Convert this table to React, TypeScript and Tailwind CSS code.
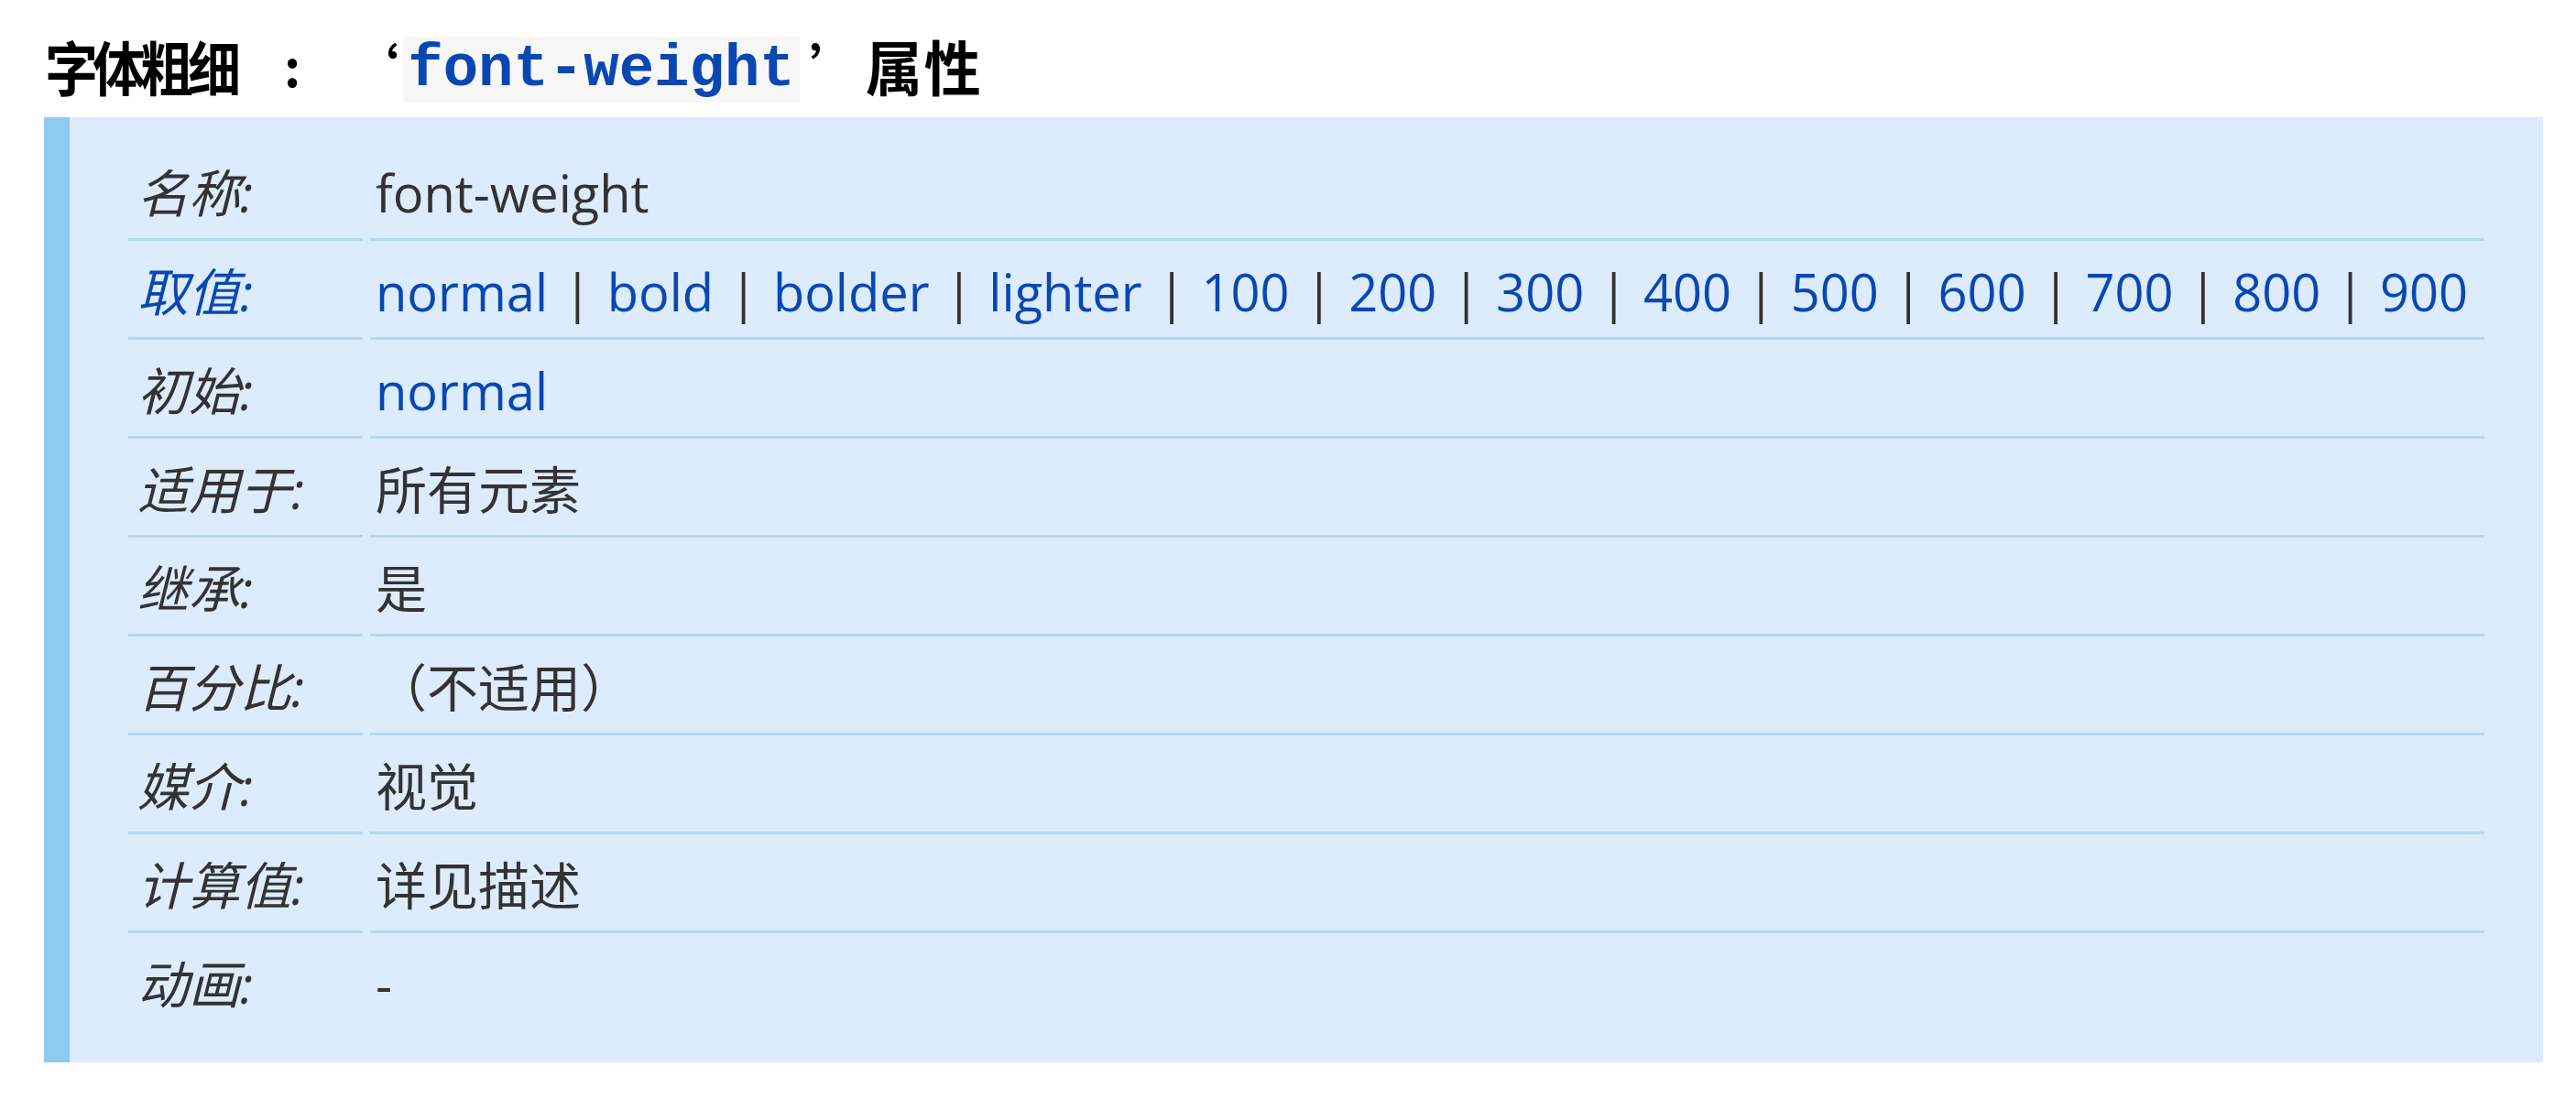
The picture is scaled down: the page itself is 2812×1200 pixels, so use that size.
import React from "react";

const Sep = () => <span className="text-[#333333] mx-[17px]">|</span>;

const values = ["normal", "bold", "bolder", "lighter", "100", "200", "300", "400", "500", "600", "700", "800", "900"];

type Row = { label: string; blueLabel?: boolean; value: React.ReactNode; last?: boolean };

const rows: Row[] = [
  { label: "名称:", value: <span className="text-[#333333]">font-weight</span> },
  {
    label: "取值:",
    blueLabel: true,
    value: (
      <span className="whitespace-nowrap">
        {values.map((v, i) => (
          <React.Fragment key={v}>
            {i > 0 && <Sep />}
            <span className="text-[#0b47b3]">{v}</span>
          </React.Fragment>
        ))}
      </span>
    ),
  },
  { label: "初始:", value: <span className="text-[#0b47b3]">normal</span> },
  { label: "适用于:", value: <span className="text-[#333333]">所有元素</span> },
  { label: "继承:", value: <span className="text-[#333333]">是</span> },
  { label: "百分比:", value: <span className="text-[#333333]">（不适用）</span> },
  { label: "媒介:", value: <span className="text-[#333333]">视觉</span> },
  { label: "计算值:", value: <span className="text-[#333333]">详见描述</span> },
  { label: "动画:", value: <span className="text-[#333333]">-</span>, last: true },
];

export default function App() {
  return (
    <div className="w-[2812px] h-[1200px] bg-white overflow-hidden font-['Noto_Sans_CJK_SC',sans-serif]">
      <div className="h-[128px] pl-[49px] pt-[14px] flex items-center text-black font-bold">
        <span className="inline-block text-[58px] tracking-[-6px] leading-none scale-y-[1.1]">字体粗细</span>
        <span className="text-[56px] leading-none ml-[53px]">:</span>
        <span className="text-[56px] leading-none ml-[51px]">‘</span>
        <code className="ml-[5px] mt-[10px] bg-[#f7f7f7] text-[#0b47b3] font-bold text-[64px] leading-[72px] h-[72px] px-[5px] font-['Liberation_Mono',monospace]">
          font-weight
        </code>
        <span className="text-[56px] leading-none ml-[11px]">’</span>
        <span className="inline-block text-[62px] leading-none ml-[5px] tracking-[2px] scale-y-[1.05]">属性</span>
      </div>
      <div className="ml-[48px] w-[2728px] h-[1032px] bg-[#dcecfd] border-l-[28px] border-l-[#8dcbf3] pt-[27px] pl-[64px] pr-[64px]">
        <div className="grid grid-cols-[256px_1fr] gap-x-[8px] text-[56px] font-['Open_Sans','Noto_Sans_CJK_SC',sans-serif]">
          {rows.map((r) => (
            <React.Fragment key={r.label}>
              <div
                className={
                  (r.last ? "h-[105px]" : "h-[108px] border-b-[3px] border-b-[#b9d6ef]") +
                  " flex items-center pl-[10px] pt-[4px]"
                }
              >
                <span className={"italic " + (r.blueLabel ? "text-[#0b47b3]" : "text-[#333333]")}>{r.label}</span>
              </div>
              <div
                className={
                  (r.last ? "h-[105px]" : "h-[108px] border-b-[3px] border-b-[#b9d6ef]") +
                  " flex items-center pl-[6px] pt-[4px]"
                }
              >
                {r.value}
              </div>
            </React.Fragment>
          ))}
        </div>
      </div>
    </div>
  );
}
